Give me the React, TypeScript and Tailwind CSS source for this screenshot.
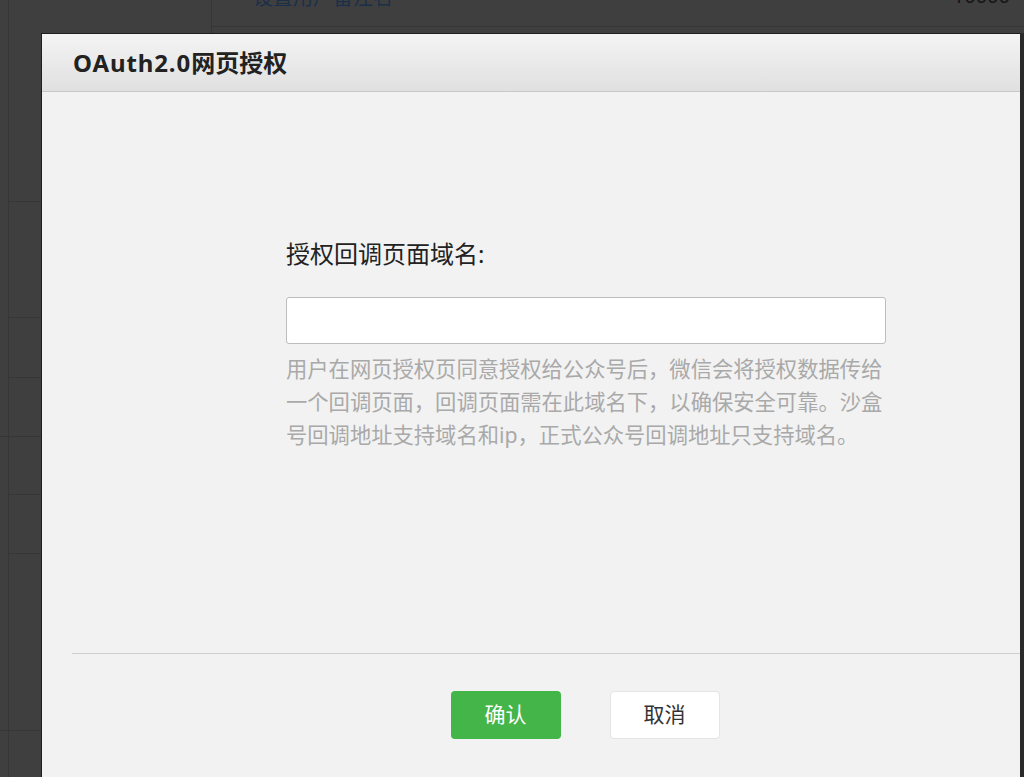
const font = "font-['Noto_Sans','Noto_Sans_CJK_SC',sans-serif]";

function BackgroundPage() {
  const rows = [202, 318, 378, 437, 495, 554, 731];
  return (
    <div className="absolute inset-0 flex">
      <div className="w-[9px] h-full border-r border-[#363636] flex flex-col">
        <div className="h-[437px] border-b border-[#363636]" />
        <div className="h-[294px] border-b border-[#363636]" />
      </div>
      <div className="w-[203px] h-full border-r border-[#363636] flex flex-col">
        {rows.map((y, i) => (
          <div
            key={y}
            className="border-b border-[#363636]"
            style={{ height: y - (i === 0 ? 0 : rows[i - 1]) }}
          />
        ))}
      </div>
      <div className="flex-1 h-full">
        <div className="h-[27px] border-b border-[#363636] flex justify-between pl-[41px] pr-[14px] overflow-hidden">
          <span className="text-[20px] leading-[20px] -mt-[12px] text-[#1b3048]">设置用户备注名</span>
          <span className="text-[20px] leading-[20px] -mt-[14px] text-[#151515]">10000</span>
        </div>
      </div>
    </div>
  );
}

function Modal() {
  return (
    <div className="absolute left-[41px] top-[33px] w-[1089px] h-[800px] border-l border-t border-[#1f1f1f] bg-[#f2f2f2] flex flex-col">
      <div className="h-[58px] shrink-0 bg-gradient-to-b from-[#f4f4f4] to-[#e0e0e0] border-b border-[#c8c8c8] flex items-center pl-[31px]">
        <h3 className="text-[24px] font-bold text-[#222] leading-none">
          <span className="tracking-[0.9px]">OAuth2.0</span>网页授权
        </h3>
      </div>
      <div className="h-[561px] shrink-0 flex justify-center pt-[146px]">
        <div className="w-[600px] flex flex-col">
          <label className="text-[24px] leading-[32px] text-[#222]">授权回调页面域名:</label>
          <input
            type="text"
            className="mt-[27px] h-[47px] w-full bg-white border border-[#bdbdbd] rounded-[3px] outline-none px-3"
          />
          <p className="mt-[8px] text-[21.3px] leading-[33px] text-[#a9a9a9]">
            用户在网页授权页同意授权给公众号后，微信会将授权数据传给一个回调页面，回调页面需在此域名下，以确保安全可靠。沙盒号回调地址支持域名和ip，正式公众号回调地址只支持域名。
          </p>
        </div>
      </div>
      <div className="mx-[30px] border-t border-[#cecece] flex justify-center gap-[49px] pt-[37px] pr-[2px]">
        <button className="w-[110px] h-[48px] rounded-[4px] bg-[#44b549] text-white text-[21px]">确认</button>
        <button className="w-[110px] h-[48px] rounded-[4px] bg-white border border-[#e3e3e8] text-[#333] text-[21px]">取消</button>
      </div>
    </div>
  );
}

export default function App() {
  return (
    <div className={`relative w-[1024px] h-[777px] overflow-hidden bg-[#3f3f3f] ${font}`}>
      <BackgroundPage />
      <Modal />
      <div className="absolute right-0 top-[33px] bottom-0 w-[4px] bg-[#2a2a2a]" />
    </div>
  );
}
